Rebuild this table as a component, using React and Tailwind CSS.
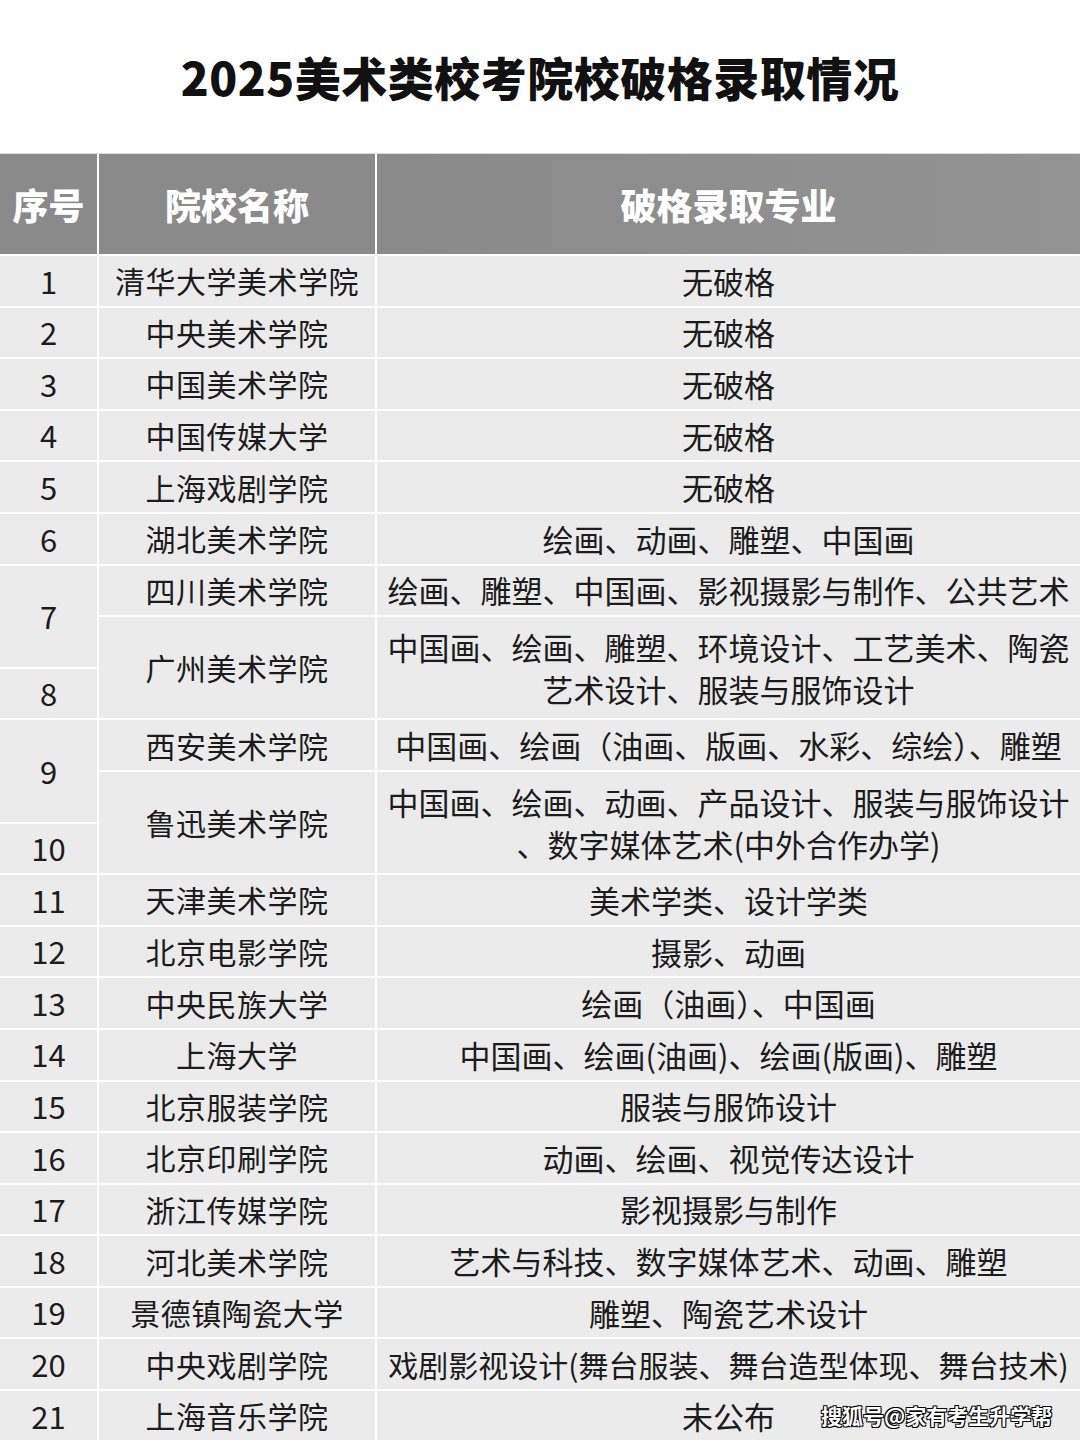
import React from "react";

const FONT = { fontFamily: '"Noto Sans CJK SC", "Noto Sans", sans-serif' };

const rows = [
  { n: "1", s: "清华大学美术学院", m: ["无破格"] },
  { n: "2", s: "中央美术学院", m: ["无破格"] },
  { n: "3", s: "中国美术学院", m: ["无破格"] },
  { n: "4", s: "中国传媒大学", m: ["无破格"] },
  { n: "5", s: "上海戏剧学院", m: ["无破格"] },
  { n: "6", s: "湖北美术学院", m: ["绘画、动画、雕塑、中国画"] },
];

const rowsB = [
  { n: "11", s: "天津美术学院", m: "美术学类、设计学类" },
  { n: "12", s: "北京电影学院", m: "摄影、动画" },
  { n: "13", s: "中央民族大学", m: "绘画（油画）、中国画" },
  { n: "14", s: "上海大学", m: "中国画、绘画(油画)、绘画(版画)、雕塑" },
  { n: "15", s: "北京服装学院", m: "服装与服饰设计" },
  { n: "16", s: "北京印刷学院", m: "动画、绘画、视觉传达设计" },
  { n: "17", s: "浙江传媒学院", m: "影视摄影与制作" },
  { n: "18", s: "河北美术学院", m: "艺术与科技、数字媒体艺术、动画、雕塑" },
  { n: "19", s: "景德镇陶瓷大学", m: "雕塑、陶瓷艺术设计" },
  { n: "20", s: "中央戏剧学院", m: "戏剧影视设计(舞台服装、舞台造型体现、舞台技术)", small: true },
  { n: "21", s: "上海音乐学院", m: "未公布" },
];

const numCls = "bg-[#ebebeb] flex items-center justify-center text-[31px] text-[#1c1c1c]";
const schCls = "bg-[#ebebeb] flex items-center justify-center text-[30px] text-[#1c1c1c] tracking-[0.5px] whitespace-nowrap";
const majCls = "bg-[#ebebeb] flex flex-col items-center justify-center text-[31px] leading-[42px] text-[#1c1c1c] whitespace-nowrap";
const majSmallCls = "bg-[#ebebeb] flex flex-col items-center justify-center text-[30px] leading-[42px] text-[#1c1c1c] whitespace-nowrap";

export default function App() {
  return (
    <div className="w-[1080px] h-[1440px] bg-white overflow-hidden relative" style={FONT}>
      <div className="h-[153px] flex items-center justify-center">
        <h1 className="text-[46px] font-black text-[#111] tracking-[0.5px]">2025美术类校考院校破格录取情况</h1>
      </div>
      <div className="grid grid-cols-[97px_276px_1fr] grid-rows-[100px_repeat(23,49.6px)] gap-[2px] bg-white border-t border-[#dcdcdc]">
        <div className="bg-[#8a8a8a] flex items-center justify-center text-[36px] font-black text-white">序号</div>
        <div className="bg-[#8a8a8a] flex items-center justify-center text-[36px] font-black text-white">院校名称</div>
        <div className="bg-gradient-to-r from-[#8a8a8a] to-[#939393] flex items-center justify-center text-[36px] font-black text-white">破格录取专业</div>

        {rows.map((r) => (
          <React.Fragment key={r.n}>
            <div className={numCls}>{r.n}</div>
            <div className={schCls}>{r.s}</div>
            <div className={majCls}>{r.m[0]}</div>
          </React.Fragment>
        ))}

        <div className={numCls + " row-span-2"}>7</div>
        <div className={schCls}>四川美术学院</div>
        <div className={majCls}>绘画、雕塑、中国画、影视摄影与制作、公共艺术</div>
        <div className={schCls + " row-span-2"}>广州美术学院</div>
        <div className={majCls + " row-span-2"}>
          <span>中国画、绘画、雕塑、环境设计、工艺美术、陶瓷</span>
          <span>艺术设计、服装与服饰设计</span>
        </div>
        <div className={numCls}>8</div>

        <div className={numCls + " row-span-2"}>9</div>
        <div className={schCls}>西安美术学院</div>
        <div className={majCls}>中国画、绘画（油画、版画、水彩、综绘）、雕塑</div>
        <div className={schCls + " row-span-2"}>鲁迅美术学院</div>
        <div className={majCls + " row-span-2"}>
          <span>中国画、绘画、动画、产品设计、服装与服饰设计</span>
          <span>、数字媒体艺术(中外合作办学)</span>
        </div>
        <div className={numCls}>10</div>

        {rowsB.map((r) => (
          <React.Fragment key={r.n}>
            <div className={numCls}>{r.n}</div>
            <div className={schCls}>{r.s}</div>
            <div className={r.small ? majSmallCls : majCls}>{r.m}</div>
          </React.Fragment>
        ))}
      </div>
      <div className="absolute left-[821px] top-[1400px] text-[21px] font-bold text-white leading-[30px] [text-shadow:1px_1px_0_#000,-1px_-1px_0_#000,1px_-1px_0_#000,-1px_1px_0_#000]">
        搜狐号@家有考生升学帮
      </div>
    </div>
  );
}
